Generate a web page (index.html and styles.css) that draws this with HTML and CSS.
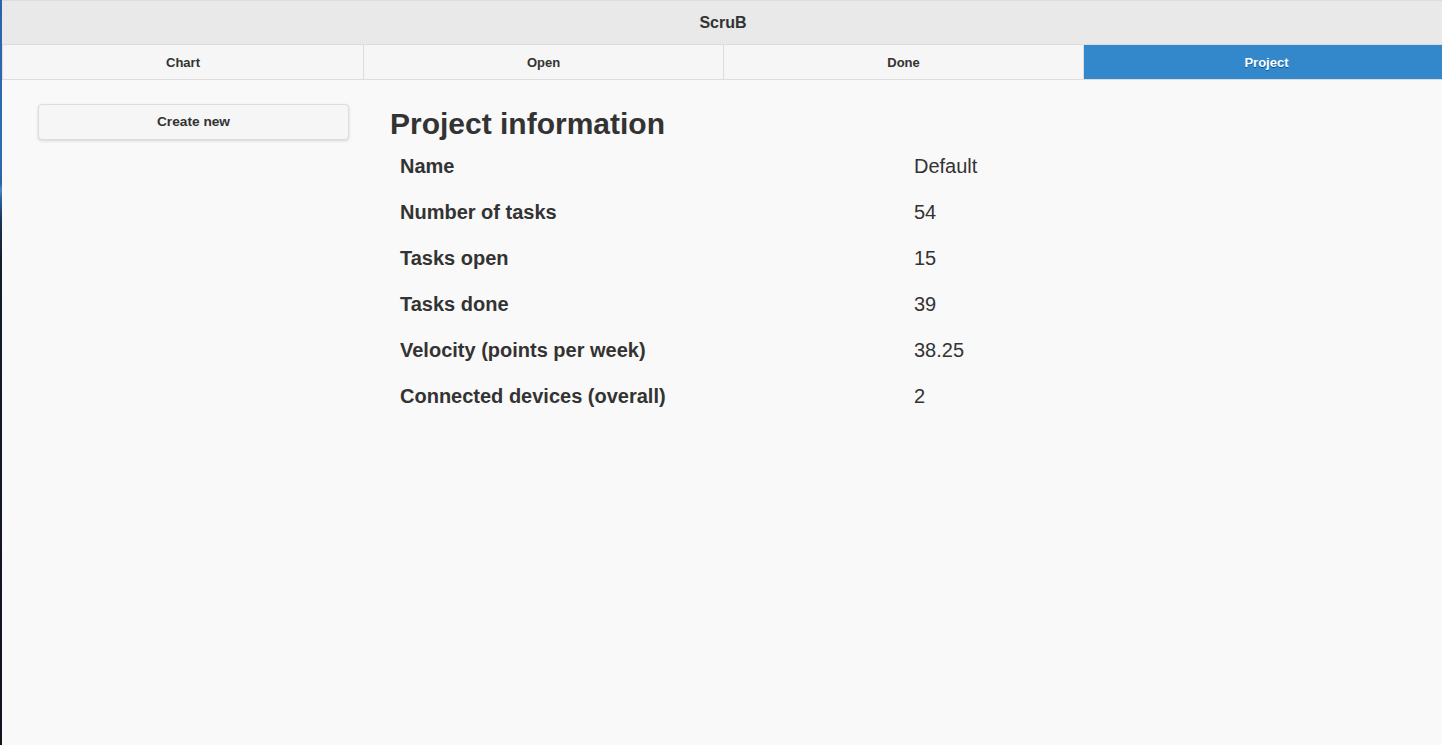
FILE: index.html
```html
<!DOCTYPE html>
<html lang="en">
<head>
<meta charset="utf-8">
<title>ScruB</title>
<link rel="stylesheet" href="styles.css">
</head>
<body>
<div class="desk"></div>
<div class="app">
  <header class="header">
    <h1 class="title">ScruB</h1>
  </header>
  <nav class="navbar">
    <a class="nav-btn">Chart</a>
    <a class="nav-btn">Open</a>
    <a class="nav-btn">Done</a>
    <a class="nav-btn active">Project</a>
  </nav>
  <main class="content">
    <aside class="side">
      <button class="btn">Create new</button>
    </aside>
    <section class="main">
      <h2 class="heading">Project information</h2>
      <div class="info">
        <div class="label">Name</div><div class="value">Default</div>
        <div class="label">Number of tasks</div><div class="value">54</div>
        <div class="label">Tasks open</div><div class="value">15</div>
        <div class="label">Tasks done</div><div class="value">39</div>
        <div class="label">Velocity (points per week)</div><div class="value">38.25</div>
        <div class="label">Connected devices (overall)</div><div class="value">2</div>
      </div>
    </section>
  </main>
</div>
</body>
</html>
```
FILE: styles.css
```css
html, body {
  margin: 0;
  padding: 0;
  height: 100%;
}
body {
  display: flex;
  font-family: "Liberation Sans", Arial, sans-serif;
  color: #333;
  background: #f9f9f9;
  overflow: hidden;
}
.desk {
  width: 2px;
  flex: none;
  background: linear-gradient(#2b63ab 0, #2f6cb6 150px, #2a62a8 183px, #4b86c6 190px, #2a5fa0 200px, #1b3559 220px, #151c2a 260px, #10141d 100%);
}
.app {
  flex: 1;
  display: flex;
  flex-direction: column;
  min-width: 0;
  overflow: hidden;
}
.header {
  height: 43px;
  border-top: 1px solid #dddddd;
  background: #e9e9e9;
  display: flex;
  align-items: center;
  justify-content: center;
}
.title {
  margin: 0;
  font-size: 16px;
  font-weight: bold;
  color: #333;
  transform: translateX(1px);
}
.navbar {
  display: grid;
  grid-template-columns: 361px 360px 360px 366px;
  border-top: 1px solid #dddddd;
  border-bottom: 1px solid #dddddd;
  border-left: 1px solid #dddddd;
  background: #f6f6f6;
  overflow: hidden;
}
.nav-btn {
  height: 34px;
  display: flex;
  align-items: center;
  justify-content: center;
  font-size: 13px;
  font-weight: bold;
  color: #333;
  text-shadow: 0 1px 0 #f3f3f3;
  border-right: 1px solid #dddddd;
}
.nav-btn.active {
  background: #3388cc;
  border-right-color: #3388cc;
  color: #fff;
  text-shadow: 0 1px 0 #005599;
}
.content {
  flex: 1;
  display: flex;
  padding-top: 24px;
  background: #f9f9f9;
}
.side {
  padding-left: 36px;
  width: 311px;
  flex: none;
}
.btn {
  display: block;
  width: 311px;
  height: 36px;
  margin: 0;
  border: 1px solid #dddddd;
  border-radius: 4px;
  background: #f6f6f6;
  box-shadow: 0 1px 3px rgba(0, 0, 0, 0.15);
  font-family: "Liberation Sans", Arial, sans-serif;
  font-size: 13.7px;
  font-weight: bold;
  color: #333;
  text-shadow: 0 1px 0 #f3f3f3;
  padding: 0 0 2px;
}
.main {
  margin-left: 41px;
  flex: 1;
  min-width: 0;
}
.heading {
  margin: 2px 0 0;
  font-size: 30px;
  line-height: 36px;
  font-weight: bold;
  color: #333;
}
.info {
  display: grid;
  grid-template-columns: 514px 1fr;
  margin-top: 1px;
  font-size: 20px;
  line-height: 26px;
}
.label, .value {
  padding: 10px;
}
.label {
  font-weight: bold;
}
```
